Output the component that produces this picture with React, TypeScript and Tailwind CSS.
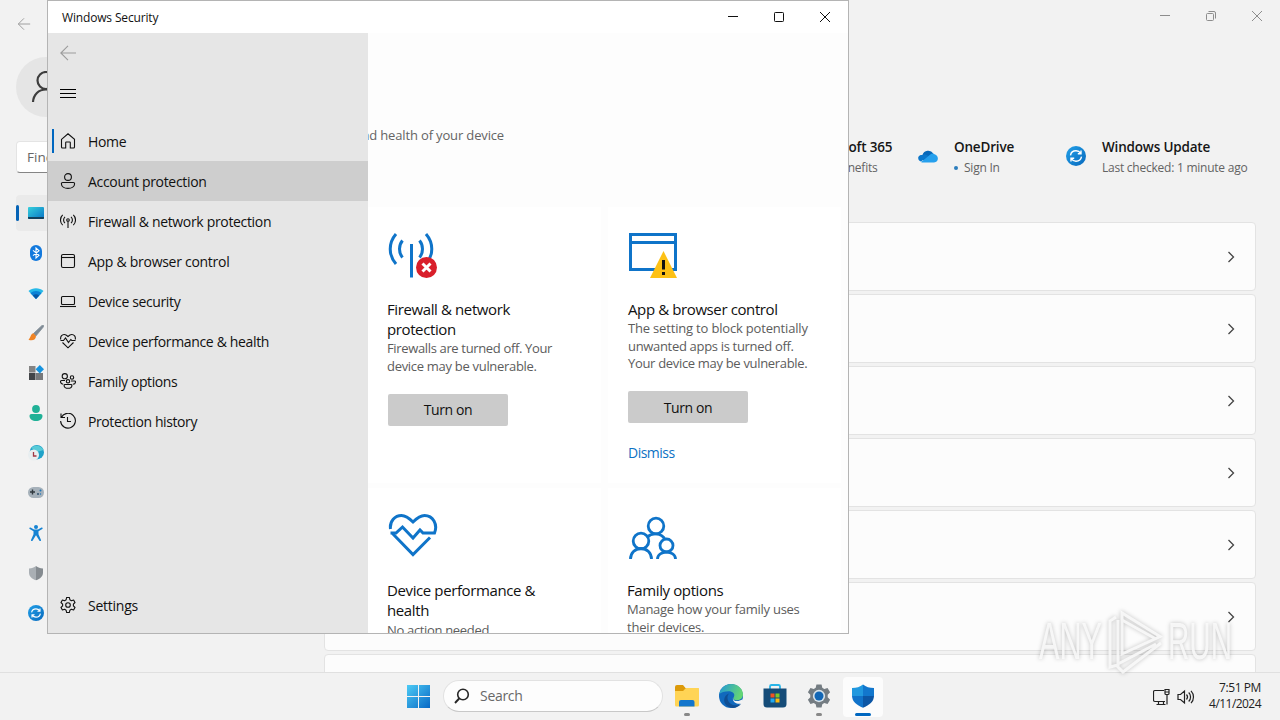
import { clsx } from 'clsx';
import type { ReactNode } from 'react';

interface IconProps {
  children: ReactNode;
  size?: number;
  className?: string;
}

// 16px line icon used by the navigation pane and the title bars
function LineIcon({ children, size = 16, className }: IconProps) {
  return (
    <svg
      width={size}
      height={size}
      viewBox="0 0 16 16"
      fill="none"
      stroke="currentColor"
      strokeWidth="1.1"
      className={clsx('shrink-0', className)}
    >
      {children}
    </svg>
  );
}

const navItems = [
  {
    label: 'Home',
    tracking: 'tracking-[-0.35px]',
    icon: <path d="M1.5 6.3 8 .8l6.500 5.500v7.700a1 1 0 0 1-1 1h-3.200V9.600a.6.6 0 0 0-.6-.6H6.300a.6.6 0 0 0-.6.6V15H2.500a1 1 0 0 1-1-1z" />,
  },
  {
    label: 'Account protection',
    tracking: 'tracking-[-0.32px]',
    icon: (
      <>
        <circle cx="8" cy="4" r="3.4" />
        <path d="M2.600 9.500h10.800a1.200 1.200 0 0 1 1.200 1.200c0 2.800-2.800 4.700-6.600 4.700s-6.600-1.900-6.600-4.700a1.200 1.200 0 0 1 1.200-1.200z" />
      </>
    ),
  },
  {
    label: 'Firewall & network protection',
    tracking: 'tracking-[-0.33px]',
    icon: (
      <>
        <circle cx="8" cy="7" r="1.300" />
        <path d="M8 8.300V15M5 10.200a4.300 4.300 0 0 1 0-6.400M11 10.200a4.300 4.300 0 0 0 0-6.400M2.700 12.200a7.200 7.200 0 0 1 0-10.400M13.300 12.200a7.200 7.200 0 0 0 0-10.400" />
      </>
    ),
  },
  {
    label: 'App & browser control',
    tracking: 'tracking-[-0.28px]',
    icon: (
      <>
        <rect x="1.500" y="1.500" width="13" height="13" rx="1.500" />
        <path d="M1.500 4.500h13" />
      </>
    ),
  },
  {
    label: 'Device security',
    tracking: 'tracking-[-0.37px]',
    icon: (
      <>
        <rect x="1.500" y="3.500" width="13" height="8" rx="1" />
        <path d="M0 13.500h16" />
      </>
    ),
  },
  {
    label: 'Device performance & health',
    tracking: 'tracking-[-0.35px]',
    icon: (
      <>
        <path d="M.8 6.500C0 3.500 2 1.500 4.200 1.500c1.500 0 2.500.7 3.800 2 1.300-1.300 2.300-2 3.800-2C14 1.500 16 3.500 15.200 6.500" />
        <path d="M.5 7.500h3L5.500 5l3 4.500L10.800 6.500l1 1h3.700M2.500 9.500 8 14.800l5.500-5.300" />
      </>
    ),
  },
  {
    label: 'Family options',
    tracking: 'tracking-[-0.4px]',
    icon: (
      <>
        <circle cx="4.800" cy="3.200" r="2.600" />
        <circle cx="12" cy="4.500" r="1.700" />
        <circle cx="8" cy="8.300" r="1.700" />
        <path d="M5 7.500H1.500a1 1 0 0 0-1 1c0 1.600 1 2.500 2.700 2.700M11 8h3.600a.9.900 0 0 1 .9.900c0 1.300-1 2.300-2.600 2.400M5 11.500h6a.9.900 0 0 1 .9.900c0 1.800-1.700 2.900-3.900 2.900s-3.900-1.100-3.900-2.900a.9.900 0 0 1 .9-.9z" />
      </>
    ),
  },
  {
    label: 'Protection history',
    tracking: 'tracking-[-0.4px]',
    icon: <path d="M1 .5v4h4M1.300 4.500A7.400 7.400 0 1 1 .6 8M7.500 4v4.500h3.500" />,
  },
];

const settingsGear = (
  <>
    <circle cx="8" cy="8" r="2.300" />
    <path d="M6.600.5h2.800l.5 2.300 1.500.9 2.200-.7L15 5.500l-1.600 1.600v1.800l1.600 1.600-1.400 2.500-2.200-.7-1.500.9-.5 2.300H6.600l-.5-2.300-1.500-.9-2.200.7L1 10.500l1.600-1.600V7.100L1 5.500 2.400 3l2.200.7 1.500-.9z" strokeLinejoin="round" />
  </>
);

function UpdateIcon({ size }: { size: number }) {
  return (
    <svg width={size} height={size} viewBox="0 0 20 20" className="shrink-0">
      <defs>
        <linearGradient id="update" x1="0" y1="0" x2="1" y2="1">
          <stop offset="0" stopColor="#22a0e8" />
          <stop offset="1" stopColor="#0869bd" />
        </linearGradient>
      </defs>
      <circle cx="10" cy="10" r="10" fill="url(#update)" />
      <path d="M4.500 9.300C5 6.300 7.200 4.800 10 4.800c2 0 3.600.9 4.700 2.600M15 4.500v3.300h-3.200M15.500 10.700c-.5 3-2.700 4.500-5.500 4.500-2 0-3.600-.9-4.700-2.600M5 15.500v-3.300h3.200" fill="none" stroke="#fff" strokeWidth="1.400" />
    </svg>
  );
}

const categoryIcons: ReactNode[] = [
  // System
  <svg key="system" width="16" height="12" viewBox="0 0 16 12">
    <defs>
      <linearGradient id="sys" x1="0" y1="0" x2="1" y2="1">
        <stop offset="0" stopColor="#36d0dc" />
        <stop offset="1" stopColor="#0873c5" />
      </linearGradient>
    </defs>
    <rect width="16" height="12" rx="1" fill="url(#sys)" />
    <path d="M0 10h16v1a1 1 0 0 1-1 1H1a1 1 0 0 1-1-1z" fill="#12405d" />
  </svg>,
  // Bluetooth
  <svg key="bluetooth" width="16" height="16" viewBox="0 0 16 16">
    <rect x="2" width="12" height="16" rx="6" fill="#1379dd" />
    <path d="m5 5.300 6 5L8 13V3l3 2.700-6 5" fill="none" stroke="#fff" strokeWidth="1.100" />
  </svg>,
  // Network
  <svg key="network" width="16" height="16" viewBox="0 0 16 16">
    <path d="M.5 6C4.500 2.200 11.500 2.200 15.500 6L8 14z" fill="#27b9e8" />
    <path d="M2.500 8.200c3-3 8-3 11 0L8 14z" fill="#0c82d5" />
    <path d="M4.800 10.500c1.800-1.700 4.600-1.700 6.400 0L8 14z" fill="#0756a5" />
  </svg>,
  // Personalisation
  <svg key="brush" width="16" height="16" viewBox="0 0 16 16">
    <path d="m15.500.4-1.200-.2L5.500 8.500l2.300 2.600L15.300 2z" fill="#7f8b95" stroke="#7f8b95" strokeWidth=".8" />
    <path d="M5.500 8.300c-3 .5-2.500 4-5 6.500 4 1.500 7.500 0 7.500-3.800z" fill="#f08425" />
  </svg>,
  // Apps
  <svg key="apps" width="16" height="16" viewBox="0 0 16 16">
    <path d="M1 1h6.500v6.500H1z" fill="#848484" />
    <path d="M1 8h6.500v7H1z" fill="#424548" />
    <path d="M8 8h7v7H8z" fill="#77797b" />
    <path d="m11.800 0 4.200 4.200-4.200 4.200-4.200-4.200z" fill="#1593df" />
  </svg>,
  // Accounts
  <svg key="accounts" width="16" height="16" viewBox="0 0 16 16" fill="#20b197">
    <circle cx="8" cy="4" r="3.900" />
    <path d="M3.500 9h9c1.300 0 2 .8 2 2 0 3-3 5-6.500 5s-6.500-2-6.500-5c0-1.200.7-2 2-2z" />
  </svg>,
  // Time and language
  <svg key="time" width="16" height="16" viewBox="0 0 16 16">
    <circle cx="8.800" cy="7.200" r="7.200" fill="#20a2c8" />
    <path d="M3.300 3C7-1 14 1 15.500 5L9 7z" fill="#58cbd8" />
    <circle cx="5.500" cy="10" r="5.500" fill="#e8eef0" />
    <path d="M5.500 7v4h3" fill="none" stroke="#a03945" strokeWidth="1.300" />
  </svg>,
  // Gaming
  <svg key="gaming" width="16" height="16" viewBox="0 0 16 16">
    <rect x="0" y="2" width="16" height="11" rx="5.500" fill="#a6b1ba" />
    <path d="M4.500 4.500v5M2 7h5" stroke="#30383e" strokeWidth="1.400" />
    <circle cx="10" cy="9" r="1" fill="#30536e" />
    <circle cx="12.500" cy="5.500" r="1" fill="#1e75b7" />
    <circle cx="12.500" cy="9" r=".7" fill="#1e75b7" />
  </svg>,
  // Accessibility
  <svg key="accessibility" width="14" height="16" viewBox="0 0 14 16" fill="#1683d3">
    <circle cx="7" cy="2" r="2" />
    <path d="M1.500 2.500 5 4.500h4l3.500-2c1-.4 1.700.8.8 1.400L9.500 6.300v3L12 15c.3 1-1.200 1.600-1.700.6L7 10.300l-3.300 5.300C3.200 16.600 1.700 16 2 15l2.500-5.700v-3L.7 3.900c-.9-.6-.2-1.800.8-1.400z" />
  </svg>,
  // Privacy
  <svg key="privacy" width="16" height="16" viewBox="0 0 16 16">
    <path d="M8 1c2 1.500 4 2.300 7 2.500v4c0 4-2.800 6.200-7 7.800z" fill="#858b90" />
    <path d="M8 1C6 2.500 4 3.300 1 3.500v4c0 4 2.800 6.200 7 7.800z" fill="#a9afb4" />
  </svg>,
  // Windows Update
  <UpdateIcon key="update" size={16} />,
];

interface CaptionButtonsProps {
  restored?: boolean;
  className: string;
}

function CaptionButtons({ restored, className }: CaptionButtonsProps) {
  return (
    <div className={clsx('flex h-8 items-center', className)}>
      <div className="flex w-[46px] justify-center">
        <svg width="10" height="10" stroke="currentColor"><path d="M0 4.500h10" /></svg>
      </div>
      <div className="flex w-[46px] justify-center">
        {restored ? (
          <svg width="10" height="10" fill="none" stroke="currentColor">
            <rect x=".5" y="2.500" width="7" height="7" rx="1" />
            <path d="M2.500.5H8A1.500 1.500 0 0 1 9.500 2v5.500" />
          </svg>
        ) : (
          <svg width="10" height="10" fill="none" stroke="currentColor">
            <rect x=".5" y=".5" width="9" height="9" rx=".8" />
          </svg>
        )}
      </div>
      <div className="flex w-[46px] justify-center">
        <svg width="10" height="10" stroke="currentColor"><path d="m0 0 10 10M10 0 0 10" /></svg>
      </div>
    </div>
  );
}

interface StatusProps {
  icon: ReactNode;
  title: string;
  detail: ReactNode;
  className: string;
}

function Status({ icon, title, detail, className }: StatusProps) {
  return (
    <div className={clsx('flex items-center gap-4 whitespace-nowrap', className)}>
      {icon}
      <div className="pt-0.5">
        <div className="text-[13.5px] leading-[21px] font-semibold tracking-[-0.18px] text-[#161616]">{title}</div>
        <div className="text-[12px] leading-5 tracking-[-0.24px] text-[#636363]">{detail}</div>
      </div>
    </div>
  );
}

function SettingsWindow() {
  return (
    <div className="flex h-[672px] flex-col overflow-hidden">
      <div className="flex h-12 shrink-0 justify-between">
        <LineIcon size={14} className="mt-[17px] ml-[17px] text-[#9c9c9c]">
          <path d="M15 8H1.500M8 1.500 1.500 8 8 14.500" />
        </LineIcon>
        <CaptionButtons restored className="text-[#8d8d8d]" />
      </div>
      <div className="flex">
        <div className="w-[324px] shrink-0 px-4 pt-[9px]">
          <div className="flex size-[60px] items-center justify-center rounded-full bg-[#e5e5e5]">
            <svg width="30" height="32" fill="none" stroke="#3d3d3d" strokeWidth="2.200">
              <circle cx="15" cy="9.500" r="8.500" />
              <path d="M2 31c.5-7.500 5.500-12.500 13-12.500S27.500 23.500 28 31" />
            </svg>
          </div>
          <div className="mt-6 flex h-8 items-center rounded border border-[#e4e4e4] border-b-[#858585] bg-white pl-2.5 text-[13.5px] text-[#666]">
            Find a setting
          </div>
          <div className="mt-[22px] flex flex-col gap-1">
            {categoryIcons.map((icon, i) => (
              <div key={i} className={clsx('flex h-9 items-center rounded', i === 0 && 'bg-[#eaeaea]')}>
                <div className={clsx('h-4 w-[3px] rounded-full', i === 0 && 'bg-[#0563b6]')} />
                <div className="ml-[7px] flex w-5 justify-center">{icon}</div>
              </div>
            ))}
          </div>
        </div>
        <div className="w-[932px]">
          <div className="flex h-[174px] pt-[88px]">
            <div className="flex w-[594px] justify-end">
              <Status icon={null} title="Microsoft 365" detail="View benefits" className="h-10 w-[112px]" />
            </div>
            <Status
              className="h-10 w-[148px]"
              icon={
                <svg width="20" height="14" viewBox="0 0 20 14" className="shrink-0">
                  <path d="M4.500 6A6 6 0 0 1 15.300 4.500L9 11 2 11C-.5 9-.2 6 4.500 6z" fill="#0868b9" />
                  <path d="M5 5.800c2-.6 4 .2 5.500 1.300L3 12.500C-.8 11.500-1 6.500 5 5.800z" fill="#0b77cc" />
                  <path d="M3 12.900 12 5.700c1.300-1 2.700-1.400 4-.8 5 1 5.300 8.100 0 8.600H5c-.8 0-1.400-.2-2-.6z" fill="#26a0ed" />
                </svg>
              }
              title="OneDrive"
              detail={
                <span className="flex items-center gap-1.5">
                  <span className="size-1 rounded-full bg-[#2c7ebd]" />
                  Sign In
                </span>
              }
            />
            <Status icon={<UpdateIcon size={20} />} title="Windows Update" detail="Last checked: 1 minute ago" className="h-10" />
          </div>
          <div className="flex flex-col gap-[3px]">
            {[1, 2, 3, 4, 5, 6, 7].map((row) => (
              <div key={row} className="flex h-[69px] shrink-0 items-center justify-end rounded border border-[#e3e3e3] bg-[#fcfcfc] pr-[19px]">
                <svg width="10" height="12" fill="none" stroke="#444" strokeWidth="1.300"><path d="m2.500 1 5 5-5 5" /></svg>
              </div>
            ))}
          </div>
        </div>
      </div>
    </div>
  );
}

interface Line {
  text: string;
  className: string;
}

interface CardProps {
  icon: ReactNode;
  title: string[];
  detail: Line[];
  children?: ReactNode;
  className?: string;
}

function Card({ icon, title, detail, children, className }: CardProps) {
  return (
    <div className={clsx('h-[276px] w-[233px] shrink-0 bg-white pt-[25px] pl-5 whitespace-nowrap', className)}>
      <div className="h-[67px]">{icon}</div>
      <div className="mb-px">
        {title.map((line) => (
          <div key={line} className="text-[15px] leading-5 tracking-[-0.39px] text-[#111]">{line}</div>
        ))}
      </div>
      {detail.map((line) => (
        <div key={line.text} className={clsx('text-[13px] leading-[17.700px] text-[#5c5c5c]', line.className)}>{line.text}</div>
      ))}
      {children}
    </div>
  );
}

function TurnOnButton() {
  return (
    <button className="mt-[18.200px] block h-8 w-[120px] rounded-[2px] bg-[#cbcbcb] text-[14px] tracking-[-0.4px] text-[#111]">Turn on</button>
  );
}

function SecurityWindow() {
  return (
    <div className="absolute top-0 left-[47px] flex h-[634px] w-[802px] flex-col overflow-hidden border border-[#b4b4b4] bg-[#fdfdfd]">
      <div className="flex h-8 shrink-0 items-center justify-between bg-white pl-3.5 text-[12px] text-[#111]">
        <span className="pt-0.5 tracking-[-0.16px]">Windows Security</span>
        <CaptionButtons className="text-[#111]" />
      </div>
      <div className="flex h-[600px]">
        <div className="flex w-80 shrink-0 flex-col bg-[#e6e6e6] text-[14px] text-[#111]">
          <div className="flex h-10 items-center pl-3">
            <LineIcon className="text-[#9c9c9c]"><path d="M16 8H1M8 .8.800 8 8 15.200" /></LineIcon>
          </div>
          <div className="mb-2 flex h-10 items-center pl-3">
            <LineIcon><path d="M0 4.500h16M0 8.500h16M0 12.500h16" stroke="#000" /></LineIcon>
          </div>
          {navItems.map((item, i) => (
            <div key={item.label} className={clsx('flex h-10 items-center pl-1', i === 1 && 'bg-[#cecece]')}>
              <div className={clsx('h-6 w-0.5', i === 0 && 'bg-[#0067c0]')} />
              <LineIcon className="mr-3 ml-1.5">{item.icon}</LineIcon>
              <span className={item.tracking}>{item.label}</span>
            </div>
          ))}
          <div className="mt-auto mb-2 flex h-10 items-center pl-3">
            <LineIcon className="mr-3">{settingsGear}</LineIcon>
            <span className="tracking-[-0.25px]">Settings</span>
          </div>
        </div>
        <div className="w-[480px]">
          <div className="flex h-[174px] w-[136px] justify-end overflow-hidden pt-[92px] text-[13px] leading-5 tracking-[-0.15px] whitespace-nowrap text-[#646464]">
            See what's happening with the security and health of your device
          </div>
          <div className="flex flex-wrap gap-x-[7px] gap-y-[5px]">
            <Card
              className="pl-[19px]"
              title={['Firewall & network', 'protection']}
              detail={[
                { text: 'Firewalls are turned off. Your', className: 'tracking-[-0.35px]' },
                { text: 'device may be vulnerable.', className: 'tracking-[-0.3px]' },
              ]}
              icon={
                <svg width="51" height="48" viewBox="-1 0 51 48" fill="none" stroke="#0f74c9" strokeWidth="3">
                  <path d="M8 2C.3 11 .3 23 8 32M14.500 8.500c-4 5-4 12 0 17M38 2c7.700 9 7.700 21 0 30M31.500 8.500c4 5 4 12 0 17M23.500 12v33.500" />
                  <circle cx="38.500" cy="35.500" r="10.500" fill="#d91f2b" stroke="none" />
                  <path d="m34.500 31.500 8 8m0-8-8 8" stroke="#fff" />
                </svg>
              }
            >
              <div className="pl-px">
                <TurnOnButton />
              </div>
            </Card>
            <Card
              title={['App & browser control']}
              detail={[
                { text: 'The setting to block potentially', className: 'tracking-[-0.18px]' },
                { text: 'unwanted apps is turned off.', className: 'tracking-[-0.32px]' },
                { text: 'Your device may be vulnerable.', className: 'tracking-[-0.32px]' },
              ]}
              icon={
                <svg width="50" height="48" fill="none">
                  <path d="M2.500 2.500h45v35h-45zM2.500 10.500h45" stroke="#0f74c9" strokeWidth="3" />
                  <path d="M35.500 19 49 46H22z" fill="#fdc116" />
                  <path d="M35.500 28v9.500M35.500 40v3" stroke="#111" strokeWidth="3" />
                </svg>
              }
            >
              <TurnOnButton />
              <div className="mt-5 text-[14px] leading-5 tracking-[-0.5px] text-[#0c72c4]">Dismiss</div>
            </Card>
            <Card
              className="pl-[19px]"
              title={['Device performance &', 'health']}
              detail={[{ text: 'No action needed.', className: 'pt-px tracking-[-0.33px]' }]}
              icon={
                <svg width="51" height="48" viewBox="-1 0 51 48" fill="none" stroke="#0f74c9" strokeWidth="3">
                  <path d="M2.500 16C1.500 8 7 2.500 13.500 2.500c4 0 7 2 11.500 6.500 4.500-4.500 7.500-6.500 11.500-6.500 8.500 0 13.500 9 10 17.500H35l-3-3-7 8L14.500 14 8 20H2.500" />
                  <path d="M4.500 20.500 25 41.500l17-17" />
                </svg>
              }
            />
            <Card
              className="pl-[19px]"
              title={['Family options']}
              detail={[
                { text: 'Manage how your family uses', className: 'tracking-[-0.27px]' },
                { text: 'their devices.', className: 'tracking-[-0.2px]' },
              ]}
              icon={
                <svg width="50" height="48" fill="none" stroke="#0f74c9" strokeWidth="2.800">
                  <circle cx="29" cy="13" r="7.800" />
                  <circle cx="14" cy="28" r="7.800" />
                  <circle cx="39.500" cy="32.500" r="6.500" />
                  <path d="M3.500 46c0-6 4.500-10.500 10.500-10.500S24.500 40 24.500 46M30.500 46c0-4 4-7 9-7s9 3 9 7M20.500 24c4-4.500 14-4.500 17.500 2.500" />
                </svg>
              }
            />
          </div>
        </div>
      </div>
    </div>
  );
}

const pinnedApps = [
  {
    name: 'explorer',
    marker: 'w-1.5 bg-[#888]',
    icon: (
      <svg width="24" height="24" viewBox="0 0 24 24">
        <path d="M0 3a2 2 0 0 1 2-2h6l2.500 3H22a2 2 0 0 1 2 2v5H0z" fill="#dc9a0a" />
        <path d="M0 7h8l3-3h12a1 1 0 0 1 1 1v16a1.500 1.500 0 0 1-1.500 1.500h-21A1.500 1.500 0 0 1 0 21z" fill="#ffd455" />
        <path d="M4 22.500V18a2 2 0 0 1 2-2h11.500a2 2 0 0 1 2 2v4.500z" fill="#1376cc" />
      </svg>
    ),
  },
  {
    name: 'edge',
    marker: '',
    icon: (
      <svg width="24" height="24" viewBox="0 0 24 24">
        <defs>
          <linearGradient id="edge" x1="0" y1="0" x2="1" y2=".3">
            <stop offset="0" stopColor="#2197d9" />
            <stop offset="1" stopColor="#64d675" />
          </linearGradient>
        </defs>
        <circle cx="12" cy="12" r="12" fill="#1169bd" />
        <path d="M.2 10C1.800 3.500 6.500 0 12 0c7 0 12 5 12 10.500 0 3.500-2.500 5.700-6 5.700-2.500 0-4.500-1-3.500-2.500C17 10 13.500 7.300 9.500 7.300 5.500 7.300 2 8.500.200 10z" fill="url(#edge)" />
        <path d="M10 9.500c-4 5 .5 12 7 11.800 2.200 0 3.800-.7 5.300-1.800C18 26 8 25 5.500 18.500 4.300 14.500 6.500 10.500 10 9.500z" fill="#104e93" />
        <path d="M13.800 14.500c.7 3 5.700 3.500 9.700.8l.5 3.700-1.700.5c-3.500 1-8.300-.5-8.500-5z" fill="#f3f3f3" />
      </svg>
    ),
  },
  {
    name: 'store',
    marker: '',
    icon: (
      <svg width="24" height="24" viewBox="0 0 24 24">
        <path d="M7 6V2.500A1.500 1.500 0 0 1 8.500 1h7A1.500 1.500 0 0 1 17 2.500V6" fill="none" stroke="#29b5e8" strokeWidth="1.800" />
        <path d="M.5 4.500h23V20a3.500 3.500 0 0 1-3.500 3.500H4A3.500 3.500 0 0 1 .5 20z" fill="#154c78" />
        <path d="M7.500 9.500h4v4h-4z" fill="#f15421" />
        <path d="M12.500 9.500h4v4h-4z" fill="#80c726" />
        <path d="M7.500 14.500h4v4h-4z" fill="#20a9ef" />
        <path d="M12.500 14.500h4v4h-4z" fill="#fcb90f" />
      </svg>
    ),
  },
  {
    name: 'settings',
    marker: 'w-1.5 bg-[#888]',
    icon: (
      <svg width="24" height="24" viewBox="0 0 16 16">
        <path d="M6.300.3h3.400l.5 2.200 1.300.8 2.200-.7L15.400 5.500l-1.600 1.600v1.800l1.600 1.600-1.700 2.900-2.200-.7-1.300.8-.5 2.200H6.300l-.5-2.200-1.300-.8-2.200.7-1.700-2.900 1.600-1.600V7.100L.6 5.500l1.700-2.900 2.200.7 1.300-.8z" fill="#747c82" />
        <circle cx="8" cy="8" r="4.100" fill="#d6e2ea" />
        <circle cx="8" cy="8" r="3" fill="#1266b5" />
      </svg>
    ),
  },
  {
    name: 'security',
    marker: 'w-4 bg-[#0067c0]',
    icon: (
      <svg width="24" height="24" viewBox="0 0 24 24">
        <path d="M12 .500C9 3 5.500 4 1 4v8h11z" fill="#2198df" />
        <path d="M12 .500C15 3 18.500 4 23 4v8H12z" fill="#1277cd" />
        <path d="M1 12c.3 5.800 4.500 9 11 11.700V12z" fill="#1173ca" />
        <path d="M23 12c-.3 5.800-4.500 9-11 11.700V12z" fill="#0c56a5" />
      </svg>
    ),
  },
];

function Taskbar() {
  return (
    <div className="flex h-12 items-center border-t border-[#e0e0e0] bg-[#f2f2f2] pl-[407px]">
      <svg width="24" height="24" className="mb-0.5 shrink-0">
        <defs>
          <linearGradient id="start" x1="0" y1="0" x2="1" y2="1">
            <stop offset="0" stopColor="#4ccbf5" />
            <stop offset="1" stopColor="#0868c5" />
          </linearGradient>
        </defs>
        <path d="M0 1h11v11H0zM12 1h11v11H12zM0 13h11v11H0zM12 13h11v11H12z" fill="url(#start)" />
      </svg>
      <div className="mb-0.5 ml-3 flex h-8 w-[220px] shrink-0 items-center gap-2.5 rounded-full border border-[#e2e2e2] border-b-[#c8c8c8] bg-[#fdfdfd] pl-2.5 text-[14px] text-[#686868]">
        <LineIcon className="text-[#272727]">
          <circle cx="9" cy="6.500" r="5.300" strokeWidth="1.600" />
          <path d="m5.200 10.500-4.200 4.500" strokeWidth="1.900" />
        </LineIcon>
        <span className="tracking-[-0.3px]">Search</span>
      </div>
      <div className="ml-1 flex gap-1">
        {pinnedApps.map((app) => (
          <div
            key={app.name}
            className={clsx('flex h-10 w-10 flex-col items-center justify-between rounded pt-[7px]', app.name === 'security' && 'bg-[#fcfcfc]')}
          >
            {app.icon}
            <div className={clsx('mb-px h-[3px] rounded-full', app.marker)} />
          </div>
        ))}
      </div>
      <div className="ml-auto flex items-center pr-[19px]">
        <svg width="18" height="18" fill="none" stroke="#222" strokeWidth="1.200" className="mr-1.5">
          <path d="M11 2.500H2A1.500 1.500 0 0 0 .5 4v8A1.500 1.500 0 0 0 2 13.500h10M5.500 13.500v3M10.500 13.500v3M3.500 16.500h9M14 7v9.500M12 1.500h4v4a1 1 0 0 1-1 1h-2a1 1 0 0 1-1-1zM12 4h4" />
        </svg>
        <svg width="18" height="16" fill="none" stroke="#222" strokeWidth="1.200" className="mr-3.5">
          <path d="M1 5.500h2.500L7.500 2v12l-4-3.500H1zM9.500 5.500c1.300 1.500 1.300 3.500 0 5M11.700 3.500c2.500 2.500 2.500 6.500 0 9M14 1.800c3.300 3.500 3.300 8.900 0 12.400" />
        </svg>
        <div className="pb-px text-right text-[12px] leading-4 text-[#222]">
          <div className="tracking-[-0.42px]">7:51 PM</div>
          <div className="tracking-[-0.55px]">4/11/2024</div>
        </div>
      </div>
    </div>
  );
}

function Watermark() {
  return (
    <svg width="204" height="72" viewBox="0 0 204 72" className="absolute top-[606px] left-[1034px] drop-shadow-[0_0_2px_rgba(0,0,0,0.28)]">
      <g fill="#fafafa" fillOpacity=".85" fontFamily="Liberation Sans" fontSize="51">
        <text x="5" y="53" textLength="63" lengthAdjust="spacingAndGlyphs">ANY</text>
        <text x="134" y="53" textLength="64" lengthAdjust="spacingAndGlyphs">RUN</text>
      </g>
      <g fill="none" stroke="#fafafa" strokeOpacity=".85" strokeWidth="3">
        <path d="M88 7v41l38-17.500zM88 14l34 19" />
        <path d="M82 11l-6 4v46l8-2V14M83 60l6 6 38-29M84 58l38-20" />
      </g>
    </svg>
  );
}

export default function App() {
  return (
    <div className="relative h-[720px] w-[1280px] overflow-hidden bg-[#f2f2f2] font-['Open_Sans','Noto_Sans',sans-serif]">
      <SettingsWindow />
      <Taskbar />
      <SecurityWindow />
      <Watermark />
    </div>
  );
}
